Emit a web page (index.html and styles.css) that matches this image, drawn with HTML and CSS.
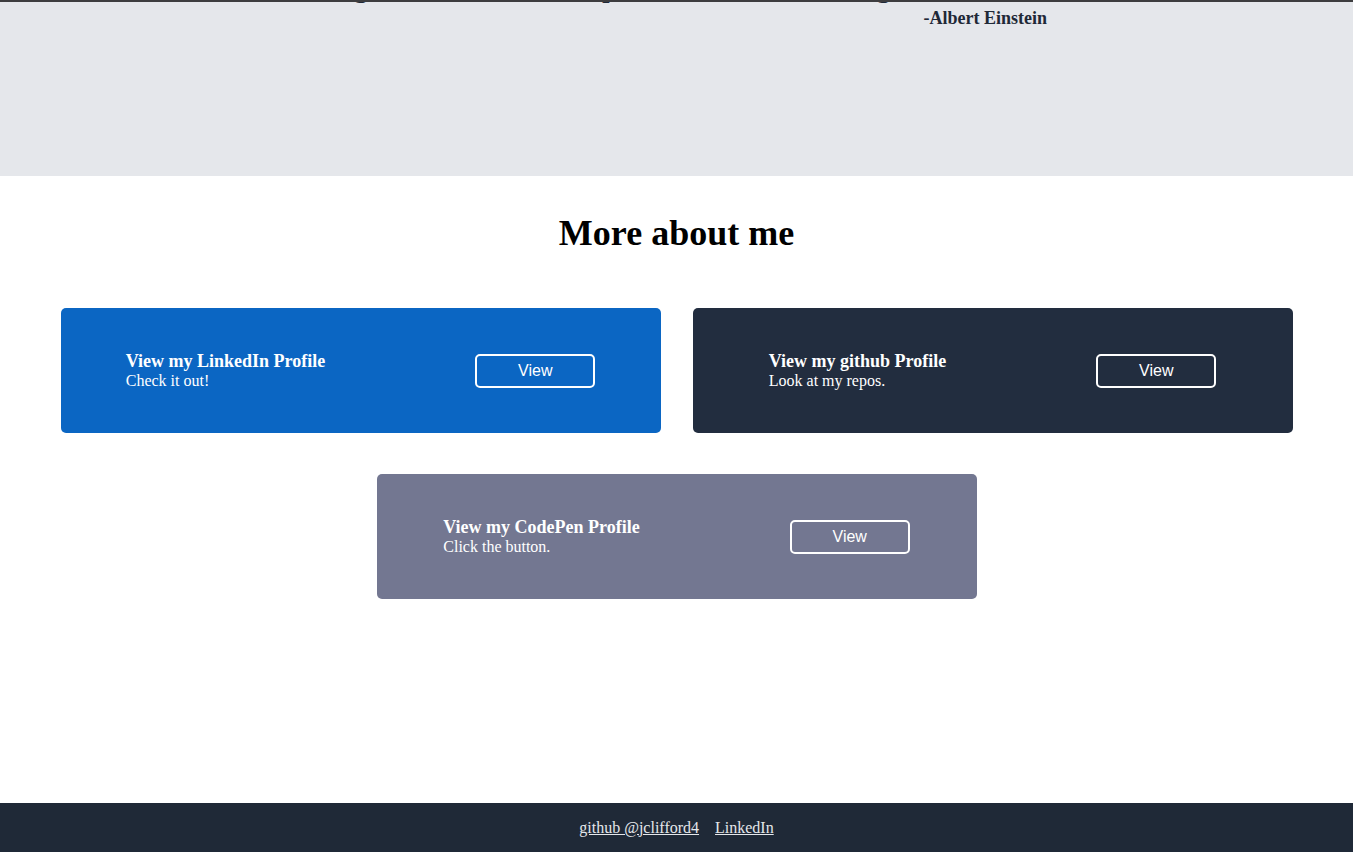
FILE: index.html
```html
<!DOCTYPE html>
<html lang="en">
<head>
<meta charset="utf-8">
<title>About me</title>
<link rel="stylesheet" href="styles.css">
</head>
<body>
  <header class="hero">
    <blockquote class="quote">
      <p class="quote-text">Imagination is more important than knowledge.</p>
      <p class="quote-author">-Albert Einstein</p>
    </blockquote>
  </header>

  <main class="more">
    <h2 class="more-title">More about me</h2>
    <div class="cards">
      <div class="card card-linkedin">
        <div class="card-text">
          <h3 class="card-title">View my LinkedIn Profile</h3>
          <p class="card-sub">Check it out!</p>
        </div>
        <button class="card-btn">View</button>
      </div>
      <div class="card card-github">
        <div class="card-text">
          <h3 class="card-title">View my github Profile</h3>
          <p class="card-sub">Look at my repos.</p>
        </div>
        <button class="card-btn">View</button>
      </div>
      <div class="card card-codepen">
        <div class="card-text">
          <h3 class="card-title">View my CodePen Profile</h3>
          <p class="card-sub">Click the button.</p>
        </div>
        <button class="card-btn">View</button>
      </div>
    </div>
  </main>

  <footer class="footer">
    <a href="#" class="footer-link">github @jclifford4</a>
    <a href="#" class="footer-link">LinkedIn</a>
  </footer>
</body>
</html>
```

FILE: styles.css
```css
* { box-sizing: border-box; }

html, body {
  margin: 0;
  padding: 0;
}

body {
  font-family: "Liberation Serif", "Times New Roman", serif;
  background: #ffffff;
  color: #000000;
}

.hero {
  background: #e5e7eb;
  border-top: 2px solid #3d3d3f;
  height: 176px;
  overflow: hidden;
}

.quote {
  margin: 0 auto;
  width: 741px;
  display: flex;
  flex-direction: column;
}

.quote-text {
  margin: -33px 0 0 0;
  font-size: 32px;
  line-height: 1;
  font-style: italic;
  color: #1f2937;
}

.quote-author {
  margin: 7px 0 0 0;
  align-self: flex-end;
  font-size: 18px;
  font-weight: bold;
  color: #1f2937;
}

.more {
  padding: 37px 0 204px;
}

.more-title {
  margin: 0 0 54px;
  text-align: center;
  font-size: 36px;
  font-weight: bold;
  line-height: 41px;
}

.cards {
  width: 1232px;
  margin: 0 auto;
  display: flex;
  flex-wrap: wrap;
  justify-content: center;
  gap: 41px 32px;
}

.card {
  width: 600px;
  height: 125px;
  border-radius: 5px;
  display: flex;
  align-items: center;
  justify-content: center;
  gap: 150px;
  color: #ffffff;
}

.card-linkedin { background: #0b66c3; }
.card-github { background: #222d3f; }
.card-codepen { background: #737791; }

.card-title {
  margin: 0;
  font-size: 18px;
  font-weight: bold;
}

.card-sub {
  margin: 0;
  font-size: 16px;
}

.card-btn {
  width: 120px;
  height: 34px;
  background: transparent;
  border: 2px solid #ffffff;
  border-radius: 5px;
  color: #ffffff;
  font-family: "Liberation Sans", Arial, sans-serif;
  font-size: 16px;
  padding: 0;
  cursor: pointer;
}

.footer {
  background: #1f2937;
  height: 49px;
  display: flex;
  justify-content: center;
  align-items: center;
  gap: 16px;
}

.footer-link {
  color: #e5e7eb;
  font-size: 16px;
  text-decoration: underline;
}
```
